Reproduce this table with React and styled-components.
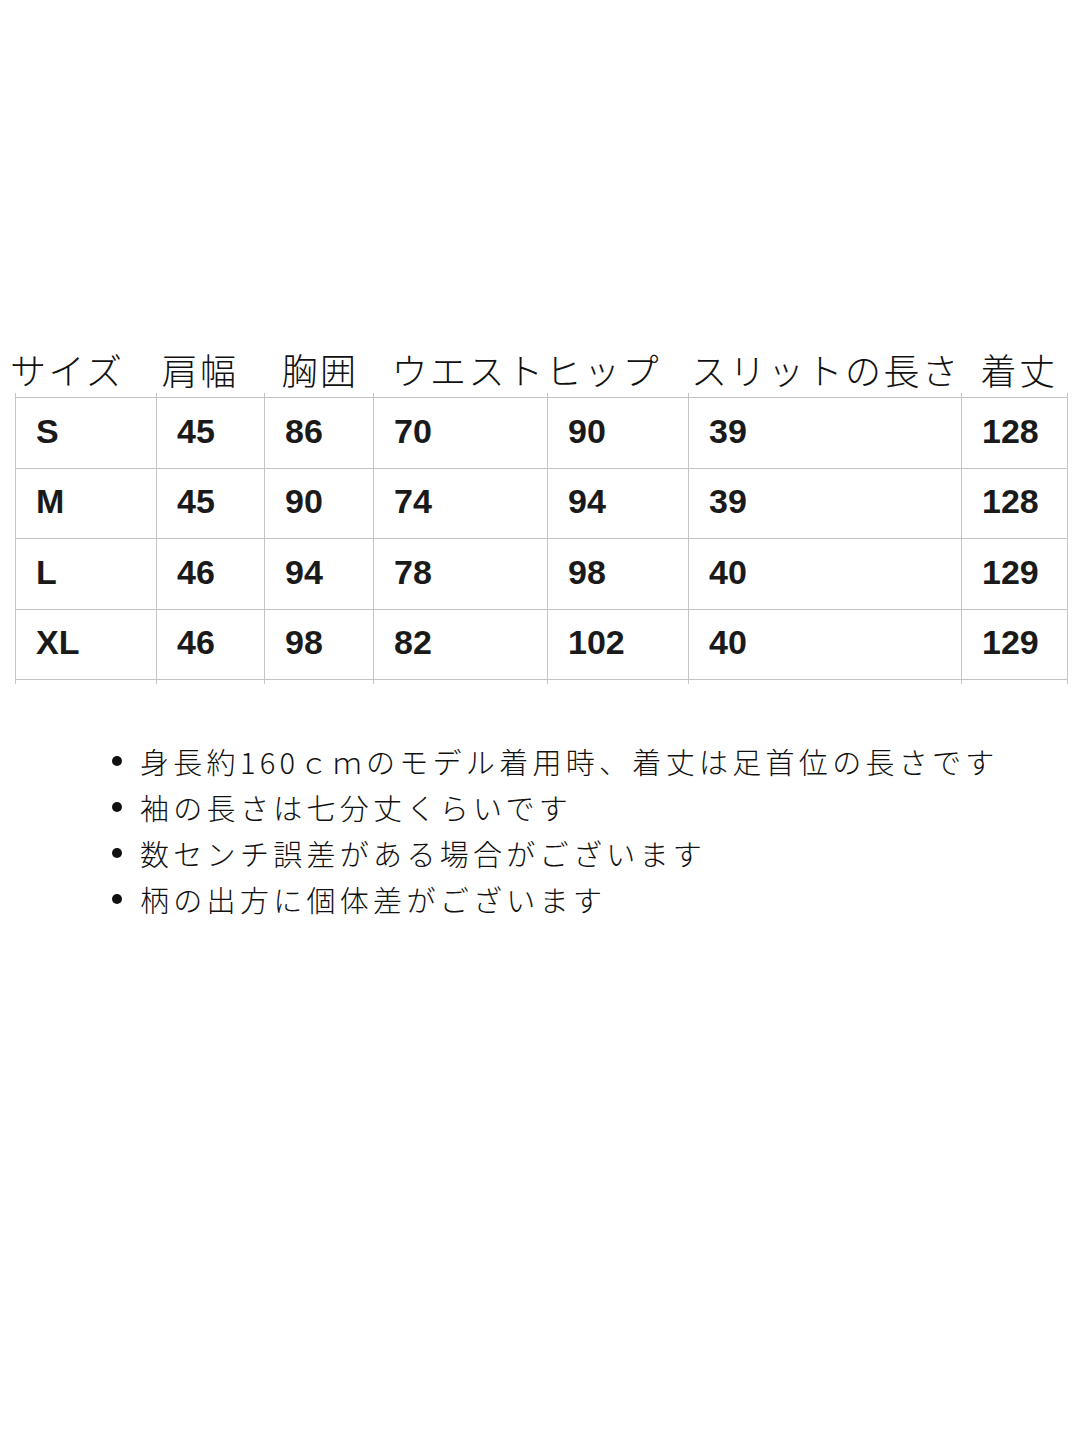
import React from "react";
import styled, { createGlobalStyle } from "styled-components";

const GlobalStyle = createGlobalStyle`
  html, body { margin: 0; padding: 0; background: #ffffff; }
  body { font-family: "Noto Sans CJK JP", "Noto Sans", sans-serif; color: #111111; }
`;

const LINE = "#c4c4c4";

const Page = styled.div`
  width: 1080px;
  min-height: 1440px;
  padding-top: 347px;
  box-sizing: border-box;
  background: #ffffff;
`;

const HeaderRow = styled.div`
  display: flex;
  align-items: center;
  height: 44px;
  margin-bottom: 2px;
  padding-left: 10px;
`;

const HeaderLabel = styled.span`
  font-family: "Noto Sans CJK JP", sans-serif;
  font-weight: 300;
  font-size: 36px;
  line-height: 44px;
  letter-spacing: 2.5px;
  white-space: nowrap;
  color: #111111;
  margin-left: ${(p) => p.$offset || 0}px;
`;

const Grid = styled.div`
  display: grid;
  grid-template-columns: 141px 108px 109px 174px 141px 273px 107px;
  margin-left: 15px;
  width: 1053px;
`;

const Spacer = styled.div`
  height: 4px;
  border-left: 1.5px solid ${LINE};
  border-right: ${(p) => (p.$last ? `1.5px solid ${LINE}` : "none")};
  border-top: ${(p) => (p.$closing ? `1.5px solid ${LINE}` : "none")};
`;

const Cell = styled.div`
  box-sizing: border-box;
  height: 70.5px;
  display: flex;
  align-items: center;
  padding: 0 0 3px 20px;
  border-left: 1.5px solid ${LINE};
  border-right: ${(p) => (p.$last ? `1.5px solid ${LINE}` : "none")};
  border-top: 1.5px solid ${LINE};
  font-family: "Liberation Sans", Arial, sans-serif;
  font-weight: 700;
  font-size: 34px;
  color: #1a1a1a;
`;

const Notes = styled.ul`
  list-style: none;
  margin: 54px 0 0 0;
  padding: 0 0 0 112px;
`;

const Note = styled.li`
  display: flex;
  align-items: center;
  font-family: "Noto Sans CJK JP", sans-serif;
  font-weight: 300;
  font-size: 29px;
  line-height: 46px;
  letter-spacing: 4.3px;
  color: #111111;
  white-space: nowrap;

  &::before {
    content: "";
    flex: none;
    width: 10px;
    height: 10px;
    border-radius: 50%;
    background: #111111;
    margin-right: 18px;
  }
`;

const headers = [
  { text: "サイズ", offset: 0 },
  { text: "肩幅", offset: 37 },
  { text: "胸囲", offset: 43 },
  { text: "ウエストヒップ", offset: 33 },
  { text: "スリットの長さ", offset: 30 },
  { text: "着丈", offset: 20 },
];

const rows = [
  ["S", "45", "86", "70", "90", "39", "128"],
  ["M", "45", "90", "74", "94", "39", "128"],
  ["L", "46", "94", "78", "98", "40", "129"],
  ["XL", "46", "98", "82", "102", "40", "129"],
];

const notes = [
  "身長約160ｃｍのモデル着用時、着丈は足首位の長さです",
  "袖の長さは七分丈くらいです",
  "数センチ誤差がある場合がございます",
  "柄の出方に個体差がございます",
];

const COLS = 7;

export default function App() {
  return (
    <>
      <GlobalStyle />
      <Page>
        <HeaderRow>
          {headers.map((h) => (
            <HeaderLabel key={h.text} $offset={h.offset}>
              {h.text}
            </HeaderLabel>
          ))}
        </HeaderRow>
        <Grid>
          {Array.from({ length: COLS }).map((_, i) => (
            <Spacer key={`top-${i}`} $last={i === COLS - 1} />
          ))}
          {rows.map((row, r) =>
            row.map((v, c) => (
              <Cell key={`${r}-${c}`} $last={c === COLS - 1}>
                {v}
              </Cell>
            ))
          )}
          {Array.from({ length: COLS }).map((_, i) => (
            <Spacer key={`bot-${i}`} $last={i === COLS - 1} $closing />
          ))}
        </Grid>
        <Notes>
          {notes.map((n) => (
            <Note key={n}>{n}</Note>
          ))}
        </Notes>
      </Page>
    </>
  );
}
